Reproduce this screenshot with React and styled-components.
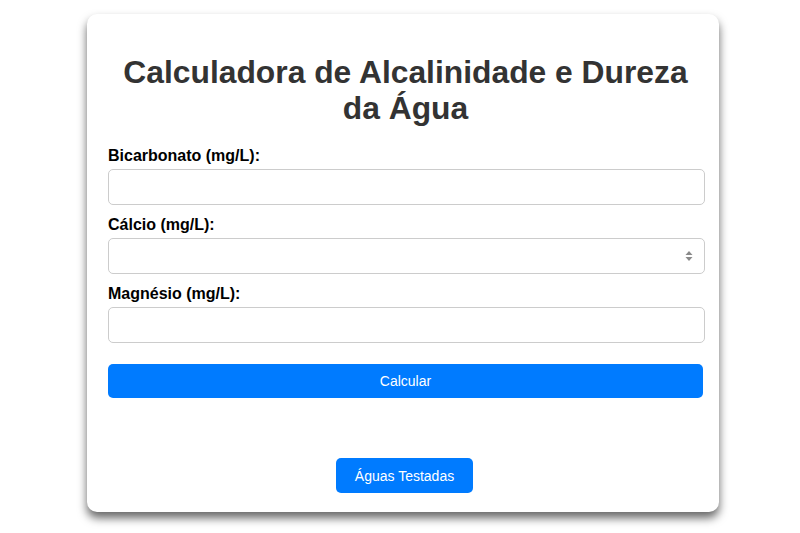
import styled, {createGlobalStyle} from 'styled-components';

const GlobalStyle = createGlobalStyle`
  html, body {
    margin: 0;
    padding: 0;
    background: #ffffff;
  }

  body {
    font-family: "Liberation Sans", Arial, sans-serif;
  }
`;

const fields = [
    {id: 'bicarbonato', label: 'Bicarbonato (mg/L):'},
    {id: 'calcio', label: 'Cálcio (mg/L):', spinner: true},
    {id: 'magnesio', label: 'Magnésio (mg/L):'},
];

export default function App() {
    return (
        <>
            <GlobalStyle/>
            <Page>
                <Card>
                    <Title>Calculadora de Alcalinidade e Dureza da Água</Title>
                    <Form onSubmit={(e) => e.preventDefault()}>
                        {fields.map((f) => (
                            <Field key={f.id}>
                                <Label htmlFor={f.id}>{f.label}</Label>
                                <InputWrapper>
                                    <Input type="text" id={f.id} name={f.id}/>
                                    {f.spinner && (
                                        <Spinner aria-hidden="true">
                                            <svg width="8" height="12" viewBox="0 0 8 12">
                                                <path d="M4 1 L7.5 5 H0.5 Z" fill="#8a8a8a"/>
                                                <path d="M4 11 L7.5 7 H0.5 Z" fill="#8a8a8a"/>
                                            </svg>
                                        </Spinner>
                                    )}
                                </InputWrapper>
                            </Field>
                        ))}
                        <SubmitButton type="submit">Calcular</SubmitButton>
                    </Form>
                    <Footer>
                        <LinkButton type="button">Águas Testadas</LinkButton>
                    </Footer>
                </Card>
            </Page>
        </>
    );
}

const Page = styled.div`
  display: flex;
  justify-content: center;
  padding: 14px 0 20px 6px;
`;

const Card = styled.div`
  width: 632px;
  box-sizing: border-box;
  padding: 20px 16px 19px 21px;
  background: #ffffff;
  border-radius: 10px;
  box-shadow: 0 6px 10px rgba(0, 0, 0, 0.6);
`;

const Title = styled.h1`
  margin: 20px 0 21px;
  font-size: 31.8px;
  line-height: 36px;
  font-weight: bold;
  color: #333333;
  text-align: center;
`;

const Form = styled.form`
  display: flex;
  flex-direction: column;
`;

const Field = styled.div`
  display: flex;
  flex-direction: column;
  gap: 4px;
  margin-bottom: 11px;
`;

const Label = styled.label`
  font-size: 16px;
  line-height: 18px;
  font-weight: bold;
  color: #000000;
`;

const InputWrapper = styled.div`
  position: relative;
  width: 597px;
`;

const Input = styled.input`
  display: block;
  width: 100%;
  height: 36px;
  box-sizing: border-box;
  padding: 8px;
  border: 1px solid #cccccc;
  border-radius: 5px;
  font-size: 16px;
  font-family: inherit;
  outline: none;
`;

const Spinner = styled.span`
  position: absolute;
  right: 12px;
  top: 12px;
  display: flex;
`;

const SubmitButton = styled.button`
  margin-top: 10px;
  width: 595px;
  height: 34px;
  border: none;
  border-radius: 5px;
  background: #007bff;
  color: #ffffff;
  font-size: 14px;
  font-family: inherit;
  cursor: pointer;
`;

const Footer = styled.div`
  display: flex;
  justify-content: center;
  margin-top: 60px;
  padding-right: 2px;
`;

const LinkButton = styled.button`
  height: 35px;
  padding: 0 19px;
  border: none;
  border-radius: 5px;
  background: #007bff;
  color: #ffffff;
  font-size: 14px;
  font-family: inherit;
  cursor: pointer;
`;
